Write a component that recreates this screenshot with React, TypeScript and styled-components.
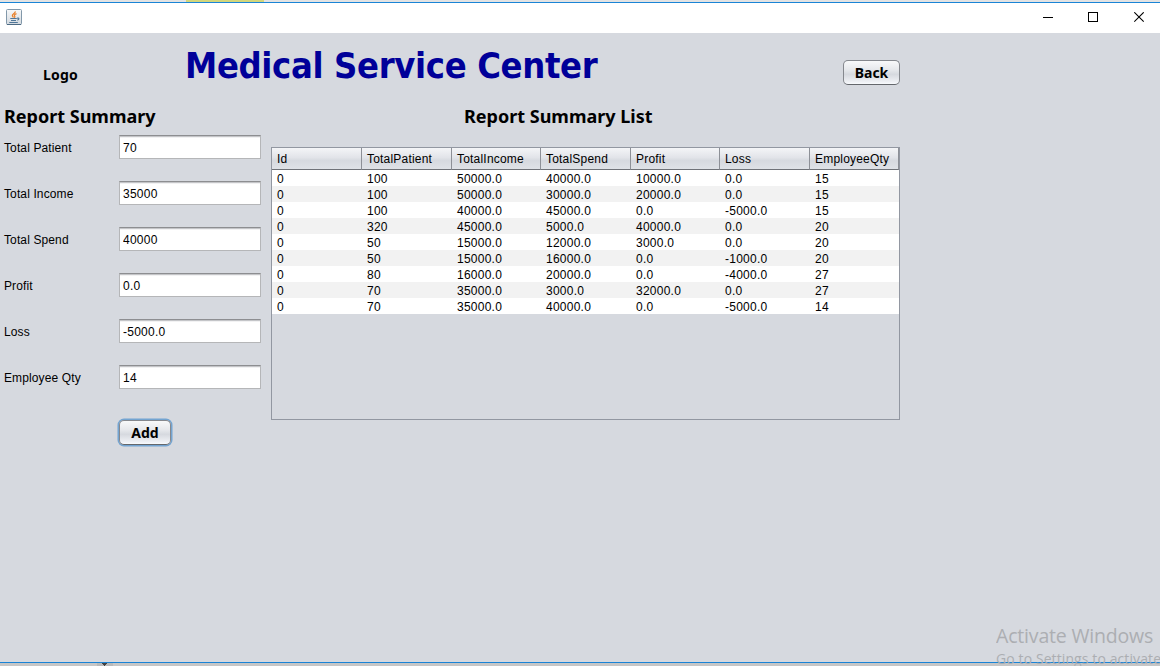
import React from 'react';
import styled, { createGlobalStyle, css } from 'styled-components';

const Global = createGlobalStyle`
  *, *::before, *::after { box-sizing: border-box; }
  body { margin: 0; overflow: hidden; background: #d6d9df; color: #000; }
  button, input { font: inherit; color: inherit; margin: 0; }
`;

const heading = css`
  margin: 0;
  font-family: 'Noto Sans', 'Open Sans', sans-serif;
  font-weight: 700;
  white-space: nowrap;
`;

const Screen = styled.div`
  position: relative;
  display: flex;
  flex-direction: column;
  width: 1160px;
  height: 666px;
  overflow: hidden;
  font: 12px/16px 'Liberation Sans', Arial, sans-serif;
`;

const TopEdge = styled.div`
  height: 3px;
  padding-left: 186px;
  background: #e3e3e3;
  border-bottom: 1px solid #1a84d6;
`;

const TabHint = styled.div`
  width: 78px;
  height: 2px;
  background: #d2d67c;
`;

const TitleBar = styled.header`
  display: flex;
  justify-content: space-between;
  align-items: flex-start;
  height: 30px;
  padding: 6px 15px 0 6px;
  background: #fff;
`;

const WindowControls = styled.div`
  display: flex;
  gap: 35px;
  padding-top: 3px;
  svg { display: block; }
`;

const Content = styled.main`
  height: 629px;
`;

const Banner = styled.div`
  display: flex;
  align-items: flex-start;
  height: 69px;
`;

const Logo = styled.span`
  ${heading}
  width: 142px;
  margin: 32px 0 0 43px;
  font-size: 14px;
  line-height: 20px;
  letter-spacing: 0.2px;
`;

const Title = styled.h1`
  ${heading}
  width: 658px;
  margin-top: 9px;
  font-family: 'DejaVu Sans Condensed', 'DejaVu Sans', sans-serif;
  font-stretch: condensed;
  font-size: 36px;
  line-height: 48px;
  letter-spacing: -0.35px;
  color: #000099;
`;

const Button = styled.button<{ $focused?: boolean }>`
  ${heading}
  display: flex;
  align-items: center;
  justify-content: center;
  width: ${p => (p.$focused ? 52 : 57)}px;
  height: 25px;
  padding: 1px 0 0;
  border: 1px solid #85888e;
  border-bottom-color: #64676c;
  border-radius: 5px;
  background: linear-gradient(#f8f9fa 0%, #e5e7eb 40%, #d6d9df 58%, #eef0f4 90%, #f8fafd 100%);
  font-size: 14px;
  line-height: 20px;
  ${p => p.$focused && css`box-shadow: 0 0 0 1.5px #73a4d1;`}
`;

const BackButton = styled(Button)`
  margin-top: 27px;
`;

const Columns = styled.div`
  display: flex;
`;

const FormPanel = styled.section`
  width: 271px;
  padding-left: 4px;
`;

const PanelTitle = styled.h2<{ $center?: boolean }>`
  ${heading}
  height: 33px;
  padding-left: ${p => (p.$center ? 193 : 0)}px;
  font-size: 18px;
  line-height: 28px;
`;

const Field = styled.label`
  display: flex;
  align-items: center;
  height: 24px;
  margin-bottom: 22px;
  > span { width: 115px; padding-top: 1px; letter-spacing: 0.12px; }
`;

const TextInput = styled.input`
  width: 142px;
  height: 24px;
  padding: 1px 3px 0;
  border: 1px solid #b5b6b8;
  border-top-color: #8d8e91;
  outline: 0;
  background: #fff;
  box-shadow: inset 0 1px 0 #c4c5c8, inset 0 2px 0 #f2f2f3;
  letter-spacing: 0.25px;
`;

const AddButton = styled(Button)`
  margin: 31px 0 0 115px;
`;

const ListPanel = styled.section`
  width: 629px;
`;

const TableFrame = styled.div`
  height: 273px;
  margin-top: 12px;
  border: 1px solid #9297a1;
`;

const Table = styled.div`
  display: grid;
  grid-template-columns: 90px 90px 89px 90px 89px 90px 89px;
  grid-template-rows: 22px;
  grid-auto-rows: 16px;
`;

const HeadCell = styled.div`
  padding-left: 5px;
  border-right: 1px solid #8d9097;
  border-bottom: 1px solid #6f7278;
  background: linear-gradient(#f4f5f7 0%, #e2e4e9 45%, #d6d9df 60%, #dfe2e7 100%);
  line-height: 23px;
  height: 22px;
  letter-spacing: 0.2px;
`;

const Cell = styled.div<{ $odd: boolean }>`
  padding: 1px 0 0 5px;
  background: ${p => (p.$odd ? '#f2f2f2' : '#fff')};
  letter-spacing: 0.25px;
`;

const BottomEdge = styled.footer`
  display: flex;
  height: 4px;
  padding-left: 97px;
  border-top: 1px solid #1a84d6;
  background: #c6c6c6;
  svg { display: block; }
`;

const Watermark = styled.div`
  position: absolute;
  left: 996px;
  top: 623px;
  width: 164px;
  height: 43px;
  overflow: hidden;
  color: #acaeb2;
  font-family: 'Open Sans', 'Noto Sans', sans-serif;
  white-space: nowrap;
`;

const WatermarkTitle = styled.div`
  font-size: 19.5px;
  line-height: 25px;
  letter-spacing: -0.18px;
`;

const WatermarkText = styled.div`
  font-size: 14px;
  line-height: 21px;
  letter-spacing: 0.1px;
`;

const JavaIcon = () => (
  <svg width="16" height="16" viewBox="0 0 16 16" fill="none">
    <defs>
      <linearGradient id="cup" x1="0" y1="0" x2="0" y2="1">
        <stop offset="0" stopColor="#f7f8f9" />
        <stop offset="1" stopColor="#d3d9df" />
      </linearGradient>
    </defs>
    <rect x=".5" y=".5" width="15" height="15" rx="1" fill="url(#cup)" stroke="#8298aa" />
    <path d="M1 15.5h14" stroke="#4d6b84" />
    <path d="M9.3 2.4C9.5 4.5 6 5 6.4 6.7c.1.7.8 1.2.9 1.8M10.5 4.6C8.3 5.3 8.2 6.3 8.7 7.1c.4.6.1 1.2-.4 1.6" stroke="#e8812c" strokeWidth="1.3" />
    <path d="M4.3 9.5h6.5M5 11.5h5M11 9.2c2.3-.7 2.6 1.2.3 2M3.3 13.5h8.5" stroke="#4f7698" strokeWidth="1.2" />
  </svg>
);

const fields: [string, string][] = [
  ['Total Patient', '70'],
  ['Total Income', '35000'],
  ['Total Spend', '40000'],
  ['Profit', '0.0'],
  ['Loss', '-5000.0'],
  ['Employee Qty', '14'],
];

const columns = ['Id', 'TotalPatient', 'TotalIncome', 'TotalSpend', 'Profit', 'Loss', 'EmployeeQty'];

const rows = [
  ['0', '100', '50000.0', '40000.0', '10000.0', '0.0', '15'],
  ['0', '100', '50000.0', '30000.0', '20000.0', '0.0', '15'],
  ['0', '100', '40000.0', '45000.0', '0.0', '-5000.0', '15'],
  ['0', '320', '45000.0', '5000.0', '40000.0', '0.0', '20'],
  ['0', '50', '15000.0', '12000.0', '3000.0', '0.0', '20'],
  ['0', '50', '15000.0', '16000.0', '0.0', '-1000.0', '20'],
  ['0', '80', '16000.0', '20000.0', '0.0', '-4000.0', '27'],
  ['0', '70', '35000.0', '3000.0', '32000.0', '0.0', '27'],
  ['0', '70', '35000.0', '40000.0', '0.0', '-5000.0', '14'],
];

export default function App() {
  return (
    <>
      <Global />
      <Screen>
        <TopEdge><TabHint /></TopEdge>
        <TitleBar>
          <JavaIcon />
          <WindowControls>
            <svg width="10" height="10" shapeRendering="crispEdges"><path d="M0 5h10v1H0z" /></svg>
            <svg width="11" height="11" viewBox="0 0 11 11" fill="none" stroke="#000" shapeRendering="crispEdges"><path d="M.5.5h9v9h-9z" /></svg>
            <svg width="11" height="11" viewBox="0 0 11 11" fill="none" stroke="#000" strokeWidth="1.1"><path d="M.3.3l9.4 9.4M9.7.3L.3 9.7" /></svg>
          </WindowControls>
        </TitleBar>
        <Content>
          <Banner>
            <Logo>Logo</Logo>
            <Title>Medical Service Center</Title>
            <BackButton type="button">Back</BackButton>
          </Banner>
          <Columns>
            <FormPanel>
              <PanelTitle>Report Summary</PanelTitle>
              {fields.map(([label, value]) => (
                <Field key={label}>
                  <span>{label}</span>
                  <TextInput defaultValue={value} />
                </Field>
              ))}
              <AddButton type="button" $focused>Add</AddButton>
            </FormPanel>
            <ListPanel>
              <PanelTitle $center>Report Summary List</PanelTitle>
              <TableFrame>
                <Table>
                  {columns.map(c => <HeadCell key={c}>{c}</HeadCell>)}
                  {rows.map((row, r) => row.map((v, c) => (
                    <Cell key={`${r}-${c}`} $odd={r % 2 === 1}>{v}</Cell>
                  )))}
                </Table>
              </TableFrame>
            </ListPanel>
          </Columns>
        </Content>
        <BottomEdge>
          <svg width="16" height="3"><path d="M0 0h16v3H0z" fill="#b9b9b9" /><path d="M5 0h5v1H9v1H8v1H7V2H6V1H5z" fill="#444" /></svg>
        </BottomEdge>
        <Watermark>
          <WatermarkTitle>Activate Windows</WatermarkTitle>
          <WatermarkText>Go to Settings to activate</WatermarkText>
        </Watermark>
      </Screen>
    </>
  );
}
